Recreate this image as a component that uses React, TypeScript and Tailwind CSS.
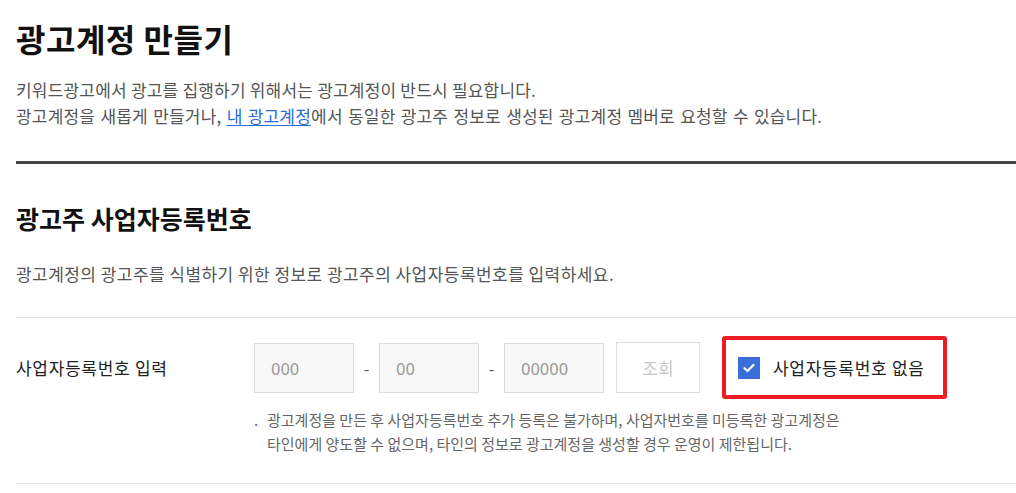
const font = { fontFamily: '"Noto Sans CJK KR", "Noto Sans", sans-serif' };

const BizInput = ({ placeholder }: { placeholder: string }) => (
  <input
    placeholder={placeholder}
    className="w-[100px] h-[50px] border border-[#dcdcdc] bg-[#f8f8f8] pl-4 text-[17px] text-[#222] placeholder:text-[#999] outline-none"
  />
);

const Dash = () => <span className="w-[25px] text-center text-[16px] text-[#555]">-</span>;

export default function App() {
  return (
    <div className="bg-white pl-4 pt-[17px] text-[#222]" style={font}>
      <h1 className="text-[32px] leading-[42px] font-bold tracking-[0.5px] text-[#111]">광고계정 만들기</h1>
      <p className="mt-[18px] text-[17px] leading-[26px] tracking-[0.2px] text-[#555]">
        키워드광고에서 광고를 집행하기 위해서는 광고계정이 반드시 필요합니다.
        <br />
        <span className="[word-spacing:1.2px]">
          광고계정을 새롭게 만들거나,{' '}
          <a href="#" className="text-[#2a6bdc] underline underline-offset-2">내 광고계정</a>
          에서 동일한 광고주 정보로 생성된 광고계정 멤버로 요청할 수 있습니다.
        </span>
      </p>

      <div className="mt-[32px] h-[3px] bg-[#444]" />

      <h2 className="mt-[38px] text-[25px] leading-[32px] font-bold text-[#111]">광고주 사업자등록번호</h2>
      <p className="mt-[27px] text-[17px] leading-[26px] tracking-[0.45px] text-[#555]">
        광고계정의 광고주를 식별하기 위한 정보로 광고주의 사업자등록번호를 입력하세요.
      </p>

      <div className="mt-[30px] border-t border-b border-[#e2e2e2] pt-[18px] pb-[27px]">
        <div className="flex items-center">
          <div className="w-[238px] text-[17px] tracking-[0.7px] text-[#222]">사업자등록번호 입력</div>
          <BizInput placeholder="000" />
          <Dash />
          <BizInput placeholder="00" />
          <Dash />
          <BizInput placeholder="00000" />
          <button className="ml-3 w-[84px] h-[51px] border border-[#dcdcdc] bg-white text-[17px] text-[#c8c8c8]">
            조회
          </button>
          <div className="ml-[22px] flex h-[63px] w-[225px] items-center rounded-[3px] border-4 border-[#ec1c24] pl-3">
            <span className="flex h-[22px] w-[22px] items-center justify-center bg-[#3a6fdb]">
              <svg width="14" height="14" viewBox="0 0 14 14" fill="none">
                <path d="M2.5 7.2l3 2.8 6-6" stroke="#fff" strokeWidth="2.2" strokeLinecap="round" strokeLinejoin="round" />
              </svg>
            </span>
            <span className="ml-[13px] text-[17px] tracking-[0.7px] text-[#222]">사업자등록번호 없음</span>
          </div>
        </div>
        <div className="mt-[9px] ml-[238px] flex text-[15px] leading-[24px] text-[#666]">
          <span className="w-[13px] shrink-0">.</span>
          <p>
            광고계정을 만든 후 사업자등록번호 추가 등록은 불가하며, 사업자번호를 미등록한 광고계정은
            <br />
            타인에게 양도할 수 없으며, 타인의 정보로 광고계정을 생성할 경우 운영이 제한됩니다.
          </p>
        </div>
      </div>
    </div>
  );
}
